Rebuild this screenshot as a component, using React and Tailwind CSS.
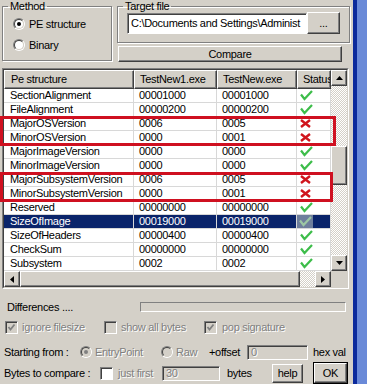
const ROWS = [
  ['SectionAlignment', '00001000', '00001000', true],
  ['FileAlignment', '00000200', '00000200', true],
  ['MajorOSVersion', '0006', '0005', false],
  ['MinorOSVersion', '0000', '0001', false],
  ['MajorImageVersion', '0000', '0000', true],
  ['MinorImageVersion', '0000', '0000', true],
  ['MajorSubsystemVersion', '0006', '0005', false],
  ['MinorSubsystemVersion', '0000', '0001', false],
  ['Reserved', '00000000', '00000000', true],
  ['SizeOfImage', '00019000', '00019000', true],
  ['SizeOfHeaders', '00000400', '00000400', true],
  ['CheckSum', '00000000', '00000000', true],
  ['Subsystem', '0002', '0002', true],
];

const SELECTED = 9;

const raised =
  'border border-t-white border-l-white border-r-[#404040] border-b-[#404040] shadow-[inset_-1px_-1px_0_#808080]';
const sunken =
  'border border-t-[#808080] border-l-[#808080] border-r-white border-b-white shadow-[inset_1px_1px_0_#404040]';
const checker =
  'bg-[repeating-conic-gradient(#ffffff_0_25%,#d4d0c8_0_50%)] bg-[length:2px_2px]';
const grayText = 'text-[#808080] [text-shadow:1px_1px_0_#fff]';

function Tick({ color = '#3dbd4a' }) {
  return (
    <svg width="13" height="11" viewBox="0 0 13 11">
      <path d="M1 4.5 L4.5 9 L12 1" fill="none" stroke={color} strokeWidth="2.2" />
    </svg>
  );
}

function Cross() {
  return (
    <svg width="11" height="9" viewBox="0 0 11 9">
      <path d="M1 1 L10 8 M10 1 L1 8" fill="none" stroke="#d0141c" strokeWidth="2.4" />
    </svg>
  );
}

function Arrow({ dir }) {
  const d = {
    up: 'M0 4 L3.5 0 L7 4 Z',
    down: 'M0 0 L7 0 L3.5 4 Z',
    left: 'M4 0 L4 7 L0 3.5 Z',
    right: 'M0 0 L0 7 L4 3.5 Z',
  }[dir];
  const vert = dir === 'up' || dir === 'down';
  return (
    <svg width={vert ? 7 : 4} height={vert ? 4 : 7} viewBox={vert ? '0 0 7 4' : '0 0 4 7'}>
      <path d={d} fill="#000" />
    </svg>
  );
}

function ScrollBtn({ dir }) {
  return (
    <div className={`w-[16px] h-[16px] shrink-0 flex items-center justify-center bg-[#d4d0c8] ${raised}`}>
      <Arrow dir={dir} />
    </div>
  );
}

function Checkbox({ checked, white }) {
  return (
    <div className={`w-[13px] h-[13px] shrink-0 flex items-center justify-center ${sunken} ${white ? 'bg-white' : 'bg-[#d4d0c8]'}`}>
      {checked && (
        <svg width="9" height="9" viewBox="0 0 9 9">
          <path d="M1.5 4 L3.5 6.5 L7.5 1.5" fill="none" stroke="#808080" strokeWidth="1.8" />
        </svg>
      )}
    </div>
  );
}

function Radio({ checked, disabled }) {
  return (
    <div className="w-[12px] h-[12px] shrink-0 rounded-full border border-t-[#808080] border-l-[#808080] border-r-white border-b-white">
      <div
        className={`w-full h-full rounded-full flex items-center justify-center border border-t-[#404040] border-l-[#404040] border-r-[#d4d0c8] border-b-[#d4d0c8] ${
          disabled ? 'bg-[#d4d0c8]' : 'bg-white'
        }`}
      >
        {checked && <div className={`w-[4px] h-[4px] rounded-full ${disabled ? 'bg-[#808080]' : 'bg-black'}`} />}
      </div>
    </div>
  );
}

export default function App() {
  return (
    <div className="flex w-[367px] h-[384px] overflow-hidden bg-[#d4d0c8] text-[11px] tracking-[-0.3px] leading-none text-black font-['Liberation_Sans',Arial,sans-serif]">
      <div className="relative w-[353px] flex flex-col">
        {/* top: method + target file */}
        <div className="flex h-[68px] shrink-0">
          <fieldset className="ml-[2px] w-[110px] h-[61px] border border-[#808080] shadow-[1px_1px_0_#fff,inset_1px_1px_0_#fff]">
            <legend className="ml-[5px] px-[2px] leading-[12px]">Method</legend>
            <div className="flex flex-col pl-[10px] pt-[6px] gap-[9px]">
              <div className="flex items-center gap-[4px] h-[12px]">
                <Radio checked />
                <span>PE structure</span>
              </div>
              <div className="flex items-center gap-[4px] h-[12px]">
                <Radio />
                <span>Binary</span>
              </div>
            </div>
          </fieldset>

          <div className="ml-[5px] flex flex-col">
            <fieldset className="w-[233px] h-[43px] border border-[#808080] shadow-[1px_1px_0_#fff,inset_1px_1px_0_#fff]">
              <legend className="ml-[5px] px-[2px] leading-[12px]">Target file</legend>
              <div className="flex items-start pl-[9px] pt-[1px]">
                <div className={`w-[180px] h-[21px] bg-white overflow-hidden whitespace-nowrap flex items-center pl-[3px] ${sunken}`}>
                  <span className="block w-[174px] overflow-hidden">C:\Documents and Settings\Administ</span>
                </div>
                <div className={`w-[33px] h-[22px] -mt-[1px] flex items-center justify-center bg-[#d4d0c8] ${raised}`}>
                  ...
                </div>
              </div>
            </fieldset>
            <div className={`ml-[1px] mt-[3px] w-[224px] h-[16px] flex items-center justify-center bg-[#d4d0c8] ${raised}`}>
              Compare
            </div>
          </div>
        </div>

        {/* list view */}
        <div className="ml-[2px] w-[347px] h-[221px] shrink-0 flex flex-col border border-t-[#808080] border-l-[#808080] border-r-white border-b-white">
          <div className="flex-1 flex flex-col border border-t-[#404040] border-l-[#404040] border-r-[#d4d0c8] border-b-[#d4d0c8]">
            <div className="flex h-[201px]">
              <div className="w-[327px] flex flex-col bg-white">
                <div className="flex h-[19px] bg-[#d4d0c8]">
                  {[
                    ['Pe structure', 'w-[130px] pl-[6px]'],
                    ['TestNew1.exe', 'w-[83px] pl-[5px]'],
                    ['TestNew.exe', 'w-[80px] pl-[5px]'],
                    ['Status', 'w-[34px] pl-[5px]'],
                  ].map(([t, c]) => (
                    <div key={t} className={`${c} h-full flex items-center overflow-hidden whitespace-nowrap ${raised}`}>
                      {t}
                    </div>
                  ))}
                </div>
                {ROWS.map(([name, a, b, ok], i) => {
                  const sel = i === SELECTED;
                  const cell = `h-full flex items-center border-b border-r border-[#d8d8d8] whitespace-nowrap overflow-hidden`;
                  return (
                    <div key={name} className={`flex h-[14px] ${sel ? 'bg-[#0a246a] text-white' : ''}`}>
                      <div className={`${cell} w-[130px] pl-[6px]`}>{name}</div>
                      <div className={`${cell} w-[83px] pl-[5px]`}>{a}</div>
                      <div className={`${cell} w-[80px] pl-[5px]`}>{b}</div>
                      <div className={`${cell} w-[34px]`}>
                        {sel ? (
                          <div className="w-[16px] h-full bg-[#6e7e9c] flex items-center justify-center">
                            <Tick color="#9cc7a4" />
                          </div>
                        ) : (
                          <div className="pl-[3px] flex items-center">{ok ? <Tick /> : <Cross />}</div>
                        )}
                      </div>
                    </div>
                  );
                })}
              </div>
              <div className="w-[16px] flex flex-col">
                <ScrollBtn dir="up" />
                <div className={`flex-1 flex flex-col ${checker}`}>
                  <div className="h-[60px]" />
                  <div className={`h-[39px] bg-[#d4d0c8] ${raised}`} />
                </div>
                <ScrollBtn dir="down" />
              </div>
            </div>
            <div className="flex h-[16px]">
              <ScrollBtn dir="left" />
              <div className={`w-[280px] h-[16px] bg-[#d4d0c8] ${raised}`} />
              <div className={`w-[15px] h-[16px] ${checker}`} />
              <ScrollBtn dir="right" />
              <div className="flex-1 bg-[#d4d0c8]" />
            </div>
          </div>
        </div>

        {/* highlight boxes */}
        <div className="absolute left-0 top-[116px] w-[336px] h-[30px] border-[3px] border-[#cf1020]" />
        <div className="absolute left-0 top-[172px] w-[333px] h-[30px] border-[3px] border-[#cf1020]" />

        {/* differences */}
        <div className="flex items-center h-[14px] mt-[11px]">
          <div className="w-[140px] pl-[7px]">Differences ....</div>
          <div className="w-[206px] h-[10px] border border-t-[#808080] border-l-[#808080] border-r-white border-b-white" />
        </div>

        {/* options */}
        <div className="flex items-center h-[13px] mt-[7px]">
          <div className="ml-[5px]"><Checkbox checked /></div>
          <span className={`ml-[4px] w-[82px] ${grayText}`}>ignore filesize</span>
          <Checkbox />
          <span className={`ml-[4px] w-[83px] ${grayText}`}>show all bytes</span>
          <Checkbox checked />
          <span className={`ml-[5px] ${grayText}`}>pop signature</span>
        </div>

        <div className="flex items-center h-[12px] mt-[12px]">
          <span className="ml-[4px] w-[76px]">Starting from :</span>
          <Radio checked disabled />
          <span className={`ml-[3px] w-[66px] ${grayText}`}>EntryPoint</span>
          <Radio disabled />
          <span className={`ml-[3px] w-[33px] ${grayText}`}>Raw</span>
          <span className="w-[38px]">+offset</span>
          <div className={`w-[61px] h-[15px] bg-[#d4d0c8] flex items-center pl-[3px] ${sunken} ${grayText}`}>0</div>
          <span className="ml-[5px] whitespace-nowrap">hex val</span>
        </div>

        <div className="flex items-center h-[22px] mt-[4px]">
          <span className="ml-[4px] w-[96px]">Bytes to compare :</span>
          <Checkbox white />
          <span className={`ml-[5px] w-[44px] ${grayText}`}>just first</span>
          <div className={`w-[58px] h-[15px] bg-[#d4d0c8] flex items-center pl-[3px] ${sunken} ${grayText}`}>30</div>
          <span className="ml-[7px] w-[45px]">bytes</span>
          <div className={`w-[31px] h-[19px] flex items-center justify-center bg-[#d4d0c8] ${raised}`}>help</div>
          <div className="ml-[10px] w-[35px] h-[22px] border border-black">
            <div className={`w-full h-full flex items-center justify-center bg-[#d4d0c8] ${raised}`}>OK</div>
          </div>
        </div>
      </div>
      <div className="w-[4px] bg-[#0b2a9c]" />
      <div className="flex-1 bg-[#6a8ad8]" />
    </div>
  );
}
